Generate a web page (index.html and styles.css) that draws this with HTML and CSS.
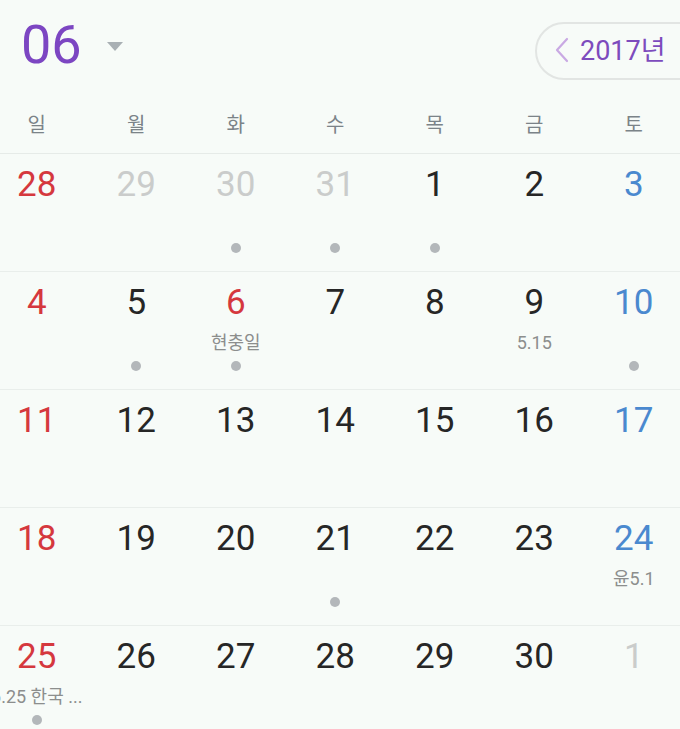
FILE: index.html
```html
<!DOCTYPE html>
<html lang="ko">
<head>
<meta charset="utf-8">
<link rel="stylesheet" href="styles.css">
</head>
<body>
<div class="app">
  <header class="top">
    <div class="month">
      <span class="month-num">06</span>
      <svg class="caret" width="16" height="9" viewBox="0 0 16 9"><path d="M0 0 H16 L8 9 Z" fill="#a9b0b4"/></svg>
    </div>
    <div class="year-pill">
      <svg class="chev" width="14" height="26" viewBox="0 0 14 26"><path d="M12 2 L2 13 L12 24" fill="none" stroke="#c9a9e3" stroke-width="2.2" stroke-linecap="round" stroke-linejoin="round"/></svg>
      <span class="year">2017년</span>
    </div>
  </header>
  <div class="grid weekdays">
    <div class="wd">일</div><div class="wd">월</div><div class="wd">화</div><div class="wd">수</div><div class="wd">목</div><div class="wd">금</div><div class="wd">토</div>
  </div>
  <div class="grid week">
    <div class="cell"><span class="num red">28</span><span class="sub"></span></div>
    <div class="cell"><span class="num gray">29</span><span class="sub"></span></div>
    <div class="cell"><span class="num gray">30</span><span class="sub"></span><span class="dot"></span></div>
    <div class="cell"><span class="num gray">31</span><span class="sub"></span><span class="dot"></span></div>
    <div class="cell"><span class="num">1</span><span class="sub"></span><span class="dot"></span></div>
    <div class="cell"><span class="num">2</span><span class="sub"></span></div>
    <div class="cell"><span class="num blue">3</span><span class="sub"></span></div>
  </div>
  <div class="grid week">
    <div class="cell"><span class="num red">4</span><span class="sub"></span></div>
    <div class="cell"><span class="num">5</span><span class="sub"></span><span class="dot"></span></div>
    <div class="cell"><span class="num red">6</span><span class="sub">현충일</span><span class="dot"></span></div>
    <div class="cell"><span class="num">7</span><span class="sub"></span></div>
    <div class="cell"><span class="num">8</span><span class="sub"></span></div>
    <div class="cell"><span class="num">9</span><span class="sub">5.15</span></div>
    <div class="cell"><span class="num blue">10</span><span class="sub"></span><span class="dot"></span></div>
  </div>
  <div class="grid week">
    <div class="cell"><span class="num red">11</span><span class="sub"></span></div>
    <div class="cell"><span class="num">12</span><span class="sub"></span></div>
    <div class="cell"><span class="num">13</span><span class="sub"></span></div>
    <div class="cell"><span class="num">14</span><span class="sub"></span></div>
    <div class="cell"><span class="num">15</span><span class="sub"></span></div>
    <div class="cell"><span class="num">16</span><span class="sub"></span></div>
    <div class="cell"><span class="num blue">17</span><span class="sub"></span></div>
  </div>
  <div class="grid week">
    <div class="cell"><span class="num red">18</span><span class="sub"></span></div>
    <div class="cell"><span class="num">19</span><span class="sub"></span></div>
    <div class="cell"><span class="num">20</span><span class="sub"></span></div>
    <div class="cell"><span class="num">21</span><span class="sub"></span><span class="dot"></span></div>
    <div class="cell"><span class="num">22</span><span class="sub"></span></div>
    <div class="cell"><span class="num">23</span><span class="sub"></span></div>
    <div class="cell"><span class="num blue">24</span><span class="sub">윤5.1</span></div>
  </div>
  <div class="grid week">
    <div class="cell"><span class="num red">25</span><span class="sub">6.25 한국 ...</span><span class="dot"></span></div>
    <div class="cell"><span class="num">26</span><span class="sub"></span></div>
    <div class="cell"><span class="num">27</span><span class="sub"></span></div>
    <div class="cell"><span class="num">28</span><span class="sub"></span></div>
    <div class="cell"><span class="num">29</span><span class="sub"></span></div>
    <div class="cell"><span class="num">30</span><span class="sub"></span></div>
    <div class="cell"><span class="num gray">1</span><span class="sub"></span></div>
  </div>
</div>
</body>
</html>
```
FILE: styles.css
```css
html, body {
  margin: 0;
  padding: 0;
  background: #f7fbf8;
  overflow: hidden;
}
body {
  width: 680px;
  height: 729px;
  font-family: Roboto, "Noto Sans CJK KR", sans-serif;
}
.app {
  width: 680px;
  overflow: hidden;
}
.top {
  height: 100px;
  display: flex;
  align-items: flex-start;
  justify-content: space-between;
}
.month {
  display: flex;
  align-items: center;
  padding-left: 21px;
  padding-top: 17px;
}
.month-num {
  font-size: 54px;
  line-height: 56px;
  color: #7c46c2;
}
.caret {
  margin-left: 25px;
  margin-top: 2px;
}
.year-pill {
  margin-top: 22px;
  margin-right: -77px;
  width: 200px;
  height: 54px;
  border: 2px solid #e2e5e3;
  border-radius: 29px;
  display: flex;
  align-items: center;
  padding-left: 18px;
  box-sizing: content-box;
}
.chev {
  margin-right: 11px;
  margin-top: -2px;
}
.year {
  font-family: Roboto, "Noto Sans CJK KR", sans-serif;
  font-size: 27px;
  color: #7d4bbd;
  margin-top: -5px;
}
.grid {
  display: grid;
  grid-template-columns: repeat(7, 99.5px);
  margin-left: -13px;
  width: 697px;
}
.weekdays {
  height: 54px;
  align-items: center;
  border-bottom: 1px solid #e6ebe8;
  box-sizing: border-box;
}
.wd {
  text-align: center;
  font-family: "Noto Sans CJK KR", sans-serif;
  font-size: 20px;
  color: #7b8388;
  margin-top: -6px;
}
.week {
  height: 118px;
  border-bottom: 1px solid #e9eeeb;
  box-sizing: border-box;
}
.cell {
  display: flex;
  flex-direction: column;
  align-items: center;
  padding-top: 11px;
}
.num {
  height: 40px;
  line-height: 40px;
  font-size: 35px;
  color: #262626;
}
.num.red { color: #d5383e; }
.num.blue { color: #4a89cf; }
.num.gray { color: #cacccb; }
.sub {
  height: 20px;
  line-height: 20px;
  margin-top: 10px;
  font-size: 18px;
  color: #8c8e8d;
  white-space: nowrap;
}
.dot {
  width: 10px;
  height: 10px;
  border-radius: 50%;
  background: #b3b7ba;
  margin-top: 8px;
}
```
